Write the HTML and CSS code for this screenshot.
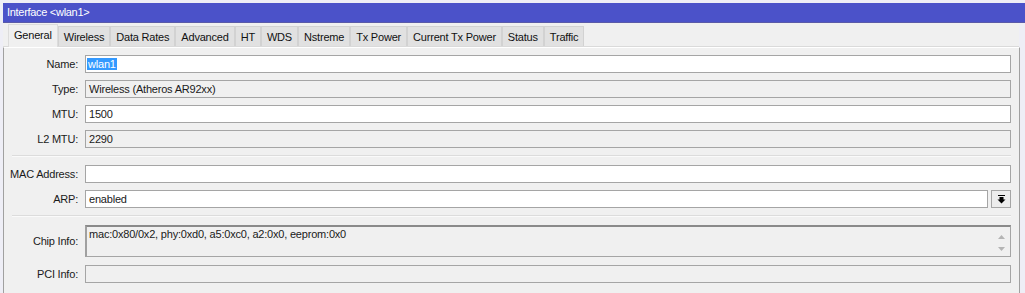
FILE: index.html
```html
<!DOCTYPE html>
<html lang="en">
<head>
    <meta charset="UTF-8">
    <title>Interface &lt;wlan1&gt;</title>
    <link rel="stylesheet" href="styles.css">
</head>
<body>
<div class="window">
    <div class="titlebar">Interface &lt;wlan1&gt;</div>

    <div class="tabs">
        <div class="tab active">General</div>
        <div class="tab">Wireless</div>
        <div class="tab">Data Rates</div>
        <div class="tab">Advanced</div>
        <div class="tab">HT</div>
        <div class="tab">WDS</div>
        <div class="tab">Nstreme</div>
        <div class="tab">Tx Power</div>
        <div class="tab">Current Tx Power</div>
        <div class="tab">Status</div>
        <div class="tab">Traffic</div>
    </div>

    <div class="panel">
        <div class="row">
            <div class="label">Name:</div>
            <div class="field"><span class="selected">wlan1</span></div>
        </div>
        <div class="row">
            <div class="label">Type:</div>
            <div class="field readonly">Wireless (Atheros AR92xx)</div>
        </div>
        <div class="row">
            <div class="label">MTU:</div>
            <div class="field">1500</div>
        </div>
        <div class="row">
            <div class="label">L2 MTU:</div>
            <div class="field readonly">2290</div>
        </div>

        <div class="separator"></div>

        <div class="row">
            <div class="label">MAC Address:</div>
            <div class="field"></div>
        </div>
        <div class="row">
            <div class="label">ARP:</div>
            <div class="field-group">
                <div class="field">enabled</div>
                <div class="drop-btn">
                    <svg width="9" height="9" viewBox="0 0 9 9">
                        <rect x="1" y="0" width="7" height="1" fill="#000"/>
                        <polygon points="2.5,2 6.5,2 6.5,4.5 8.5,4.5 4.5,8.5 0.5,4.5 2.5,4.5" fill="#000"/>
                    </svg>
                </div>
            </div>
        </div>

        <div class="separator"></div>

        <div class="row tall">
            <div class="label">Chip Info:</div>
            <div class="field readonly multiline">
                <span>mac:0x80/0x2, phy:0xd0, a5:0xc0, a2:0x0, eeprom:0x0</span>
                <div class="scroller">
                    <svg width="9" height="6" viewBox="0 0 9 6"><polygon points="4.5,1 8,5 1,5" fill="#b4b4b4"/></svg>
                    <svg width="9" height="6" viewBox="0 0 9 6"><polygon points="1,1 8,1 4.5,5" fill="#b4b4b4"/></svg>
                </div>
            </div>
        </div>
        <div class="row">
            <div class="label">PCI Info:</div>
            <div class="field readonly"></div>
        </div>
    </div>
</div>
</body>
</html>
```

FILE: styles.css
```css
html, body {
    margin: 0;
    padding: 0;
}
body {
    background-color: #f0f0f0;
    font-family: "Liberation Sans", Arial, sans-serif;
    font-size: 11px;
    letter-spacing: -0.2px;
    color: #1a1a1a;
}
.window {
    padding: 3px 0 0 3px;
    background-color: #eeeef6;
}
.titlebar {
    background-color: #4b52c9;
    color: #fff;
    font-size: 11px;
    letter-spacing: -0.3px;
    height: 19px;
    line-height: 19px;
    padding-left: 4px;
    border-bottom: 1px solid #5a5aa8;
}
/* Tab strip */
.tabs {
    display: flex;
    align-items: flex-end;
    background-color: #f0f0f0;
    padding: 2px 0 0 5px;
    height: 24px;
    box-sizing: border-box;
    border-bottom: 1px solid #dadada;
    margin-right: 6px;
}
.tab {
    height: 20px;
    line-height: 20px;
    padding: 0 5px;
    background-color: #e1e1e1;
    border: 1px solid #d2d2d2;
    border-bottom: none;
    box-sizing: border-box;
    color: #111;
}
.tab.active {
    height: 23px;
    line-height: 20px;
    background-color: #f0f0f0;
    border-color: #dcdcdc;
    position: relative;
    top: 1px;
}
/* Form panel */
.panel {
    background-color: #f0f0f0;
    border-left: 1px solid #a0a0a0;
    border-right: 1px solid #a0a0a0;
    border-top: 1px solid #fff;
    margin-right: 5px;
    padding: 7px 8px 10px 0;
    min-height: 236px;
    box-sizing: border-box;
}
.row {
    display: grid;
    grid-template-columns: 81px 1fr;
    align-items: center;
    height: 18px;
    margin-bottom: 7px;
}
.row.tall {
    height: 32px;
    align-items: start;
    margin-bottom: 8px;
}
.row.tall .label {
    line-height: 32px;
}
.label {
    text-align: right;
    padding-right: 7px;
    white-space: nowrap;
}
.field {
    height: 18px;
    box-sizing: border-box;
    border: 1px solid #a5a5a5;
    background-color: #fff;
    padding: 0 3px;
    line-height: 16px;
    white-space: nowrap;
}
.field.readonly {
    background-color: #f0f0f0;
}
.field.multiline {
    height: 32px;
    display: flex;
    justify-content: space-between;
    border-top: 2px solid #8a8a8a;
    border-left: 2px solid #a0a0a0;
    line-height: 13px;
    padding: 1px 2px 0 2px;
}
.scroller {
    display: flex;
    flex-direction: column;
    gap: 6px;
    padding: 6px 2px 0 0;
}
.selected {
    background-color: #3399ff;
    color: #fff;
    padding: 0 1px;
    margin-left: -2px;
}
.field-group {
    display: grid;
    grid-template-columns: 1fr 20px;
    gap: 3px;
}
.drop-btn {
    height: 18px;
    box-sizing: border-box;
    border: 1px solid #a5a5a5;
    background-color: #ececec;
    display: flex;
    align-items: center;
    justify-content: center;
}
.separator {
    border-top: 1px solid #dcdcdc;
    border-bottom: 1px solid #fafafa;
    margin: 1px 0 8px 8px;
}
```
